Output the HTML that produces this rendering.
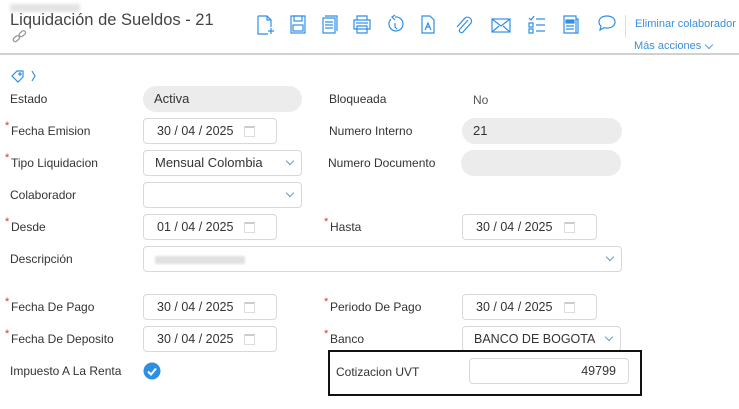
<!DOCTYPE html>
<html><head><meta charset="utf-8"><style>
*{box-sizing:border-box;margin:0;padding:0}
body{width:739px;height:409px;background:#fff;font-family:"Liberation Sans",sans-serif;color:#333;position:relative;overflow:hidden}
.a{position:absolute}
.lbl{position:absolute;font-size:12px;color:#333;line-height:14px;white-space:nowrap}
.req::before{content:"*";color:#d33;position:absolute;left:-6px;top:-5px;font-size:11px}
.box{position:absolute;height:26px;border:1px solid #d8d8d8;border-radius:4px;background:#fff;font-size:13px;line-height:24px;color:#333;white-space:nowrap}
.pill{position:absolute;height:26px;border-radius:13px;background:#ececec;font-size:13px;line-height:26px;color:#333}
.date{padding-left:13px;font-size:12.5px;word-spacing:0}
.cal{position:absolute;right:21px;top:7px;width:11px;height:11px;border:1px solid #ddd;border-top:2px solid #ccc}
.chev{position:absolute;right:8px;top:7px;width:6px;height:6px;border-right:1.3px solid #5a9fe0;border-bottom:1.3px solid #5a9fe0;transform:rotate(45deg)}
svg{position:absolute;fill:none;stroke:#2f8fe5;stroke-width:1.2}
</style></head><body>
<div class="a" style="left:10px;top:4px;width:70px;height:8px;background:#e4e4e4;filter:blur(1.5px)"></div>
<div class="a" style="left:10px;top:11px;font-size:16.5px;color:#444;font-family:'Liberation Sans',sans-serif;white-space:nowrap">Liquidación de Sueldos - 21</div>
<svg style="left:12px;top:30px" width="16" height="14" viewBox="0 0 16 14"><g stroke="#999" stroke-width="1.3"><rect x="1" y="7" width="7" height="4" rx="2" transform="rotate(-40 4 9)"/><rect x="7" y="2" width="7" height="4" rx="2" transform="rotate(-40 10 4)"/></g></svg>
<div class="a" style="left:0;top:53px;width:739px;height:2px;background:#d0d0d0"></div>
<svg style="left:257px;top:15px" width="18" height="20" viewBox="0 0 18 20"><path d="M1 1h9l4 4v7M1 1v18h10"/><path d="M10 1v4h4M14 13v6M11 16h6"/></svg>
<svg style="left:290px;top:15px" width="16" height="19" viewBox="0 0 16 19"><rect x="1" y="1" width="14" height="17"/><rect x="4" y="1" width="8" height="5"/><rect x="3" y="10" width="10" height="6"/></svg>
<svg style="left:322px;top:15px" width="16" height="19" viewBox="0 0 16 19"><path d="M3 1h12v15M1 3h12v15H1z"/><path d="M3 7h8M3 10h8M3 13h8"/></svg>
<svg style="left:353px;top:15px" width="18" height="19" viewBox="0 0 18 19"><path d="M4 5V1h10v4M1 5h16v9H1zM4 11h10v7H4z"/><path d="M3 8h12"/></svg>
<svg style="left:386px;top:14px" width="18" height="20" viewBox="0 0 18 20"><path d="M5 5A7 7 0 1 0 9 3"/><path d="M9 1 6 3l3 3M9 9v4l2 2"/></svg>
<svg style="left:421px;top:15px" width="14" height="19" viewBox="0 0 14 19"><path d="M1 1h8l4 4v13H1z"/><path d="M4 15l3-7 3 7M5 12h4"/></svg>
<svg style="left:455px;top:15px" width="18" height="20" viewBox="0 0 18 20"><path d="M13 5 5 14a2 2 0 0 0 3 3l8-9a4 4 0 0 0-6-5L2 12"/></svg>
<svg style="left:491px;top:18px" width="20" height="15" viewBox="0 0 20 15"><rect x="1" y="1" width="18" height="13"/><path d="M1 1l9 7 9-7M1 14l7-6M19 14l-7-6"/></svg>
<svg style="left:528px;top:15px" width="18" height="19" viewBox="0 0 18 19"><path d="M1 3l2 2 3-4M1 8h4v4H1zM1 14h4v4H1zM8 4h9M8 10h9M8 16h9"/></svg>
<svg style="left:563px;top:15px" width="16" height="19" viewBox="0 0 16 19"><path d="M1 1h12v17H1zM13 4h2v14h-2"/><rect x="3" y="5" width="8" height="3" fill="#2f8fe5"/><path d="M3 11h8M3 14h8"/></svg>
<svg style="left:597px;top:14px" width="20" height="18" viewBox="0 0 20 18"><path d="M10 2c5 0 8 2.5 8 6s-3 6-8 6c-1 0-2 0-3-.3L3 16l1-4C2.5 11 2 9.5 2 8c0-3.5 3-6 8-6z"/></svg>
<div class="a" style="left:625px;top:15px;width:1px;height:22px;background:#ddd"></div>
<div class="a" style="left:635px;top:18px;font-size:11px;color:#3b8fdc;white-space:nowrap">Eliminar colaborador</div>
<div class="a" style="left:634px;top:40px;font-size:11px;color:#3b8fdc;white-space:nowrap">Más acciones</div>
<div class="chev" style="left:706px;top:42px;right:auto"></div>
<svg style="left:10px;top:69px" width="28" height="14" viewBox="0 0 28 14"><path d="M2 7l5-5h6v6l-5 5z"/><circle cx="10" cy="5" r="1"/><path d="M22 2l3 5-3 5"/></svg>
<div class="lbl" style="left:10px;top:92px">Estado</div>
<div class="pill" style="left:143px;top:86px;width:159px;padding-left:11px">Activa</div>
<div class="lbl" style="left:329px;top:92px">Bloqueada</div>
<div class="lbl" style="left:473px;top:93px;color:#555">No</div>

<div class="lbl req" style="left:11px;top:124px">Fecha Emision</div>
<div class="box date" style="left:143px;top:118px;width:134px">30 / 04 / 2025<span class="cal"></span></div>
<div class="lbl" style="left:329px;top:124px">Numero Interno</div>
<div class="pill" style="left:462px;top:118px;width:160px;padding-left:11px">21</div>

<div class="lbl req" style="left:11px;top:156px">Tipo Liquidacion</div>
<div class="box" style="left:143px;top:150px;width:159px;padding-left:11px">Mensual Colombia<span class="chev"></span></div>
<div class="lbl" style="left:328px;top:156px">Numero Documento</div>
<div class="pill" style="left:461px;top:150px;width:160px"></div>

<div class="lbl" style="left:10px;top:188px">Colaborador</div>
<div class="box" style="left:143px;top:182px;width:159px"><span class="chev"></span></div>

<div class="lbl req" style="left:11px;top:220px">Desde</div>
<div class="box date" style="left:143px;top:214px;width:134px">01 / 04 / 2025<span class="cal"></span></div>
<div class="lbl req" style="left:330px;top:220px">Hasta</div>
<div class="box date" style="left:462px;top:214px;width:135px">30 / 04 / 2025<span class="cal"></span></div>

<div class="lbl" style="left:10px;top:252px">Descripción</div>
<div class="box" style="left:143px;top:246px;width:479px"><span class="a" style="left:11px;top:9px;width:90px;height:8px;background:#e0e0e0;filter:blur(1px)"></span><span class="chev"></span></div>

<div class="lbl req" style="left:11px;top:300px">Fecha De Pago</div>
<div class="box date" style="left:143px;top:294px;width:134px">30 / 04 / 2025<span class="cal"></span></div>
<div class="lbl req" style="left:330px;top:300px">Periodo De Pago</div>
<div class="box date" style="left:462px;top:294px;width:135px">30 / 04 / 2025<span class="cal"></span></div>

<div class="lbl req" style="left:11px;top:332px">Fecha De Deposito</div>
<div class="box date" style="left:143px;top:326px;width:134px">30 / 04 / 2025<span class="cal"></span></div>
<div class="lbl req" style="left:330px;top:332px">Banco</div>
<div class="box" style="left:462px;top:326px;width:159px;padding-left:11px;font-size:12.5px">BANCO DE BOGOTA<span class="chev"></span></div>

<div class="lbl" style="left:10px;top:364px">Impuesto A La Renta</div>
<svg style="left:143px;top:362px" width="18" height="18" viewBox="0 0 18 18"><circle cx="9" cy="9" r="8.5" fill="#2d8fe0" stroke="none"/><path d="M5 9.5l3 3 5-6" stroke="#fff" stroke-width="2"/></svg>

<div class="a" style="left:328px;top:350px;width:314px;height:46px;border:2px solid #111"></div>
<div class="lbl" style="left:336px;top:365px">Cotizacion UVT</div>
<div class="box" style="left:469px;top:358px;width:160px;text-align:right;padding-right:12px;font-size:12.5px">49799</div>
</body></html>
